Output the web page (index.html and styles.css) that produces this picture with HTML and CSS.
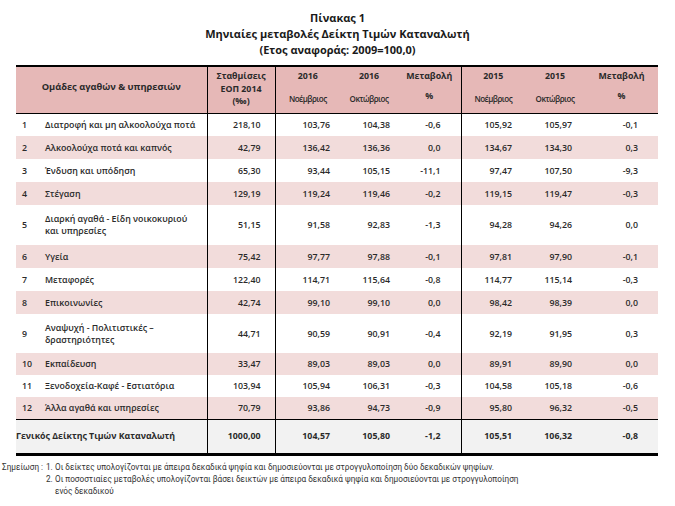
FILE: index.html
```html
<!DOCTYPE html>
<html lang="el">
<head>
<meta charset="utf-8">
<title>Πίνακας 1</title>
<link rel="stylesheet" href="styles.css">
</head>
<body>
<div class="page">
  <header class="title">
    <div>Πίνακας 1</div>
    <div>Μηνιαίες μεταβολές Δείκτη Τιμών Καταναλωτή</div>
    <div>(Ετος αναφοράς: 2009=100,0)</div>
  </header>

  <table class="cpi">
    <colgroup>
      <col class="c-no"><col class="c-name"><col class="c-w"><col class="c-n16"><col class="c-o16"><col class="c-ch16"><col class="c-n15"><col class="c-o15"><col class="c-ch15">
    </colgroup>
    <thead>
      <tr>
        <th colspan="2" class="h-group">Ομάδες αγαθών &amp; υπηρεσιών</th>
        <th class="vl h-w">Σταθμίσεις<br>ΕΟΠ 2014<br>(‰)</th>
        <th class="vl"><div class="yr">2016</div><div class="mo">Νοέμβριος</div></th>
        <th><div class="yr">2016</div><div class="mo">Οκτώβριος</div></th>
        <th><div class="yr">Μεταβολή</div><div class="pc">%</div></th>
        <th class="vl"><div class="yr">2015</div><div class="mo">Νοέμβριος</div></th>
        <th><div class="yr">2015</div><div class="mo">Οκτώβριος</div></th>
        <th><div class="yr">Μεταβολή</div><div class="pc">%</div></th>
      </tr>
    </thead>
    <tbody>
      <tr><td>1</td><td>Διατροφή και μη αλκοολούχα ποτά</td><td>218,10</td><td>103,76</td><td>104,38</td><td>-0,6</td><td>105,92</td><td>105,97</td><td>-0,1</td></tr>
      <tr class="alt"><td>2</td><td>Αλκοολούχα ποτά και καπνός</td><td>42,79</td><td>136,42</td><td>136,36</td><td>0,0</td><td>134,67</td><td>134,30</td><td>0,3</td></tr>
      <tr><td>3</td><td>Ένδυση και υπόδηση</td><td>65,30</td><td>93,44</td><td>105,15</td><td>-11,1</td><td>97,47</td><td>107,50</td><td>-9,3</td></tr>
      <tr class="alt"><td>4</td><td>Στέγαση</td><td>129,19</td><td>119,24</td><td>119,46</td><td>-0,2</td><td>119,15</td><td>119,47</td><td>-0,3</td></tr>
      <tr class="tall"><td>5</td><td>Διαρκή αγαθά - Είδη νοικοκυριού<br>και υπηρεσίες</td><td>51,15</td><td>91,58</td><td>92,83</td><td>-1,3</td><td>94,28</td><td>94,26</td><td>0,0</td></tr>
      <tr class="alt"><td>6</td><td>Υγεία</td><td>75,42</td><td>97,77</td><td>97,88</td><td>-0,1</td><td>97,81</td><td>97,90</td><td>-0,1</td></tr>
      <tr><td>7</td><td>Μεταφορές</td><td>122,40</td><td>114,71</td><td>115,64</td><td>-0,8</td><td>114,77</td><td>115,14</td><td>-0,3</td></tr>
      <tr class="alt"><td>8</td><td>Επικοινωνίες</td><td>42,74</td><td>99,10</td><td>99,10</td><td>0,0</td><td>98,42</td><td>98,39</td><td>0,0</td></tr>
      <tr class="tall t9"><td>9</td><td>Αναψυχή - Πολιτιστικές –<br>δραστηριότητες</td><td>44,71</td><td>90,59</td><td>90,91</td><td>-0,4</td><td>92,19</td><td>91,95</td><td>0,3</td></tr>
      <tr class="alt short"><td>10</td><td>Εκπαίδευση</td><td>33,47</td><td>89,03</td><td>89,03</td><td>0,0</td><td>89,91</td><td>89,90</td><td>0,0</td></tr>
      <tr class="short"><td>11</td><td>Ξενοδοχεία-Καφέ - Εστιατόρια</td><td>103,94</td><td>105,94</td><td>106,31</td><td>-0,3</td><td>104,58</td><td>105,18</td><td>-0,6</td></tr>
      <tr class="alt short"><td>12</td><td>Άλλα αγαθά και υπηρεσίες</td><td>70,79</td><td>93,86</td><td>94,73</td><td>-0,9</td><td>95,80</td><td>96,32</td><td>-0,5</td></tr>
    </tbody>
    <tfoot>
      <tr class="total"><td colspan="2">Γενικός Δείκτης Τιμών Καταναλωτή</td><td>1000,00</td><td>104,57</td><td>105,80</td><td>-1,2</td><td>105,51</td><td>106,32</td><td>-0,8</td></tr>
    </tfoot>
  </table>

  <div class="notes">
    <div class="notes-label">Σημείωση :</div>
    <div class="notes-list">
      <div class="note"><span class="nm">1.</span><span>Οι δείκτες υπολογίζονται με άπειρα δεκαδικά ψηφία και δημοσιεύονται με στρογγυλοποίηση δύο δεκαδικών ψηφίων.</span></div>
      <div class="note"><span class="nm">2.</span><span>Οι ποσοστιαίες μεταβολές υπολογίζονται βάσει δεικτών με άπειρα δεκαδικά ψηφία και δημοσιεύονται με στρογγυλοποίηση<br>ενός δεκαδικού</span></div>
    </div>
  </div>
</div>
</body>
</html>
```

FILE: styles.css
```css
* { box-sizing: border-box; }
html, body { margin: 0; padding: 0; background: #fff; }
body {
  font-family: "Open Sans", Roboto, "Noto Sans", sans-serif;
  color: #222;
}
.page { width: 675px; height: 506px; overflow: hidden; }

.title {
  padding-top: 10px;
  text-align: center;
  font-weight: 700;
  font-size: 11px;
  line-height: 16px;
  color: #1a1a1a;
}

.cpi {
  margin: 7px 0 0 16px;
  width: 642px;
  border-collapse: collapse;
  table-layout: fixed;
  font-size: 8.8px;
  font-weight: 600;
  color: #2a2a2a;
}
.c-no { width: 25px; }
.c-name { width: 166px; }
.c-w { width: 68px; }
.c-n16 { width: 65px; }
.c-o16 { width: 58px; }
.c-ch16 { width: 63px; }
.c-n15 { width: 64px; }
.c-o15 { width: 60px; }
.c-ch15 { width: 73px; }

.cpi th, .cpi td { padding: 0; }

.cpi thead th {
  background: #e6b8b7;
  border-top: 2px solid #000;
  border-bottom: 1px solid #000;
  height: 47px;
  vertical-align: top;
  text-align: center;
  font-weight: 700;
  line-height: 12px;
  padding-top: 3px;
  color: #2a2a2a;
}
.cpi thead th.h-group { padding-top: 14px; font-size: 9.3px; }
.cpi thead th.h-w { line-height: 12.5px; }
.yr { height: 12px; }
.mo { margin-top: 11px; font-size: 8px; letter-spacing: -0.5px; font-weight: 600; }
.pc { margin-top: 8px; }
.vl { border-left: 1px solid #000; }

.cpi tbody td {
  height: 23px;
  line-height: 12px;
  vertical-align: middle;
  text-align: right;
}
.cpi tbody tr.tall td { height: 40px; }
.cpi tbody tr.t9 td { height: 39px; }
.cpi tbody tr.short td { height: 22px; }
.cpi tbody tr.alt td { background: #f2dcdb; }

.cpi tbody td:nth-child(1) { text-align: left; padding-left: 6px; }
.cpi tbody td:nth-child(2) { text-align: left; padding-left: 4px; }
.cpi tbody td:nth-child(3) { padding-right: 14px; border-left: 1px solid #000; }
.cpi tbody td:nth-child(4) { padding-right: 10px; border-left: 1px solid #000; }
.cpi tbody td:nth-child(5) { padding-right: 8px; }
.cpi tbody td:nth-child(6) { padding-right: 20px; }
.cpi tbody td:nth-child(7) { padding-right: 13px; border-left: 1px solid #000; }
.cpi tbody td:nth-child(8) { padding-right: 13px; }
.cpi tbody td:nth-child(9) { padding-right: 20px; }

.cpi tfoot td {
  background: #f2f2f2;
  border-top: 1px solid #000;
  border-bottom: 3px solid #000;
  height: 35px;
  vertical-align: middle;
  text-align: right;
  font-weight: 700;
}
.cpi tfoot td:nth-child(1) { text-align: left; padding-left: 0; }
.cpi tfoot td:nth-child(2) { padding-right: 14px; border-left: 1px solid #000; }
.cpi tfoot td:nth-child(3) { padding-right: 10px; border-left: 1px solid #000; }
.cpi tfoot td:nth-child(4) { padding-right: 8px; }
.cpi tfoot td:nth-child(5) { padding-right: 20px; }
.cpi tfoot td:nth-child(6) { padding-right: 13px; border-left: 1px solid #000; }
.cpi tfoot td:nth-child(7) { padding-right: 13px; }
.cpi tfoot td:nth-child(8) { padding-right: 20px; }

.notes {
  display: grid;
  grid-template-columns: 44px auto;
  margin-top: 5px;
  padding-left: 2px;
  font-family: Roboto, "Noto Sans", sans-serif;
  font-size: 8.2px;
  line-height: 12px;
  color: #333;
  white-space: nowrap;
}
.note { display: flex; }
.nm { width: 9px; flex: none; }
```
